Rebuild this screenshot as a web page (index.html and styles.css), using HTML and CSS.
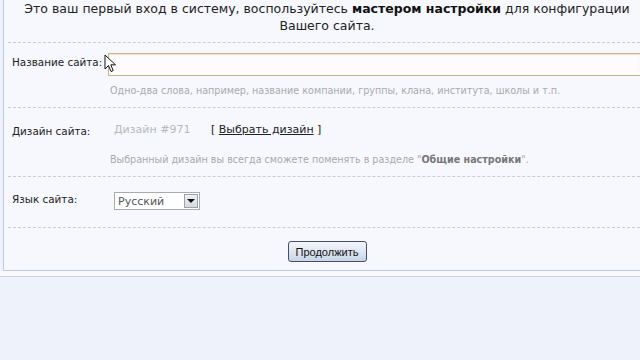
FILE: index.html
```html
<!DOCTYPE html>
<html lang="ru">
<head>
<meta charset="utf-8">
<title>Мастер настройки</title>
<link rel="stylesheet" href="styles.css">
</head>
<body>
<div class="panel">
  <div class="intro">
    <div class="line">Это ваш первый вход в систему, воспользуйтесь <b>мастером настройки</b> для конфигурации</div>
    <div class="line">Вашего сайта.</div>
  </div>

  <div class="row row-name">
    <div class="label">Название сайта:</div>
    <div class="field">
      <div class="input"></div>
      <svg class="cursor" width="14" height="20" viewBox="0 0 14 20"><path d="M1 1 L1 15 L4.5 11.5 L7 17.5 L9.2 16.6 L6.8 10.8 L11.5 10.8 Z" fill="#fff" stroke="#111" stroke-width="1" stroke-linejoin="round"/></svg>
    </div>
    <div class="hint">Одно-два слова, например, название компании, группы, клана, института, школы и т.п.</div>
  </div>

  <div class="row row-design">
    <div class="label">Дизайн сайта:</div>
    <div class="field design">
      <span class="design-name">Дизайн #971</span>
      <span class="choose">[ <u>Выбрать дизайн</u> ]</span>
    </div>
    <div class="hint">Выбранный дизайн вы всегда сможете поменять в разделе "<b>Общие настройки</b>".</div>
  </div>

  <div class="row row-lang">
    <div class="label">Язык сайта:</div>
    <div class="field">
      <div class="select"><span class="sel-text">Русский</span><span class="sel-btn"><svg width="8" height="5" viewBox="0 0 8 5"><path d="M0 0 L8 0 L4 4 Z" fill="#111"/></svg></span></div>
    </div>
  </div>

  <div class="actions">
    <button class="btn">Продолжить</button>
  </div>
</div>
<div class="strip"></div>
</body>
</html>
```
FILE: styles.css
```css
html, body {
  margin: 0;
  padding: 0;
  background: #eef2fb;
  font-family: "DejaVu Sans", Verdana, sans-serif;
  color: #222;
}
.panel {
  margin-left: 3px;
  border-left: 1px solid #bcc8dc;
  border-bottom: 1px solid #bcc8dc;
  background: #f6f8fd;
  height: 271px;
  box-sizing: border-box;
  overflow: hidden;
}
.intro {
  margin: 0 0 0 10px;
  padding: 0 0 8px;
  font-size: 12.5px;
  line-height: 17px;
  text-align: center;
  color: #222;
}
.intro b { color: #111; }
.row {
  margin-left: 4px;
  border-top: 1px dashed #c8ccd4;
  display: grid;
  grid-template-columns: 96px 1fr;
  padding-left: 4px;
}
.label {
  font-size: 10.4px;
  color: #222;
  white-space: nowrap;
}
.hint {
  grid-column: 2;
  font-size: 9.6px;
  color: #a9a9ad;
  padding-left: 2px;
}
.hint b { color: #777; }
.row-name { padding-top: 10px; height: 65px; box-sizing: border-box; }
.row-name .label { padding-top: 3px; }
.row-name .field { position: relative; }
.input {
  height: 21px;
  border: 1px solid #cdb487;
  border-right: none;
  background: #fdfbfd;
  box-shadow: inset 0 1px 1px #ece4d4;
}
.cursor { position: absolute; left: -4px; top: 1px; }
.row-name .hint { margin-top: -2px; }

.row-design { padding-top: 15px; height: 69px; box-sizing: border-box; }
.row-design .label { padding-top: 2px; }
.design { display: flex; font-size: 11px; padding-left: 6px; }
.design-name { color: #b8b8bc; width: 97px; }
.choose { color: #222; }
.row-design .hint { padding-top: 6px; }

.row-lang { padding-top: 15px; height: 51px; box-sizing: border-box; }
.row-lang .label { padding-top: 1px; }
.select {
  margin-left: 6px;
  width: 86px;
  height: 18px;
  box-sizing: border-box;
  border: 1px solid #a5acb5;
  background: #fff;
  display: flex;
  align-items: center;
  justify-content: space-between;
}
.sel-text { font-size: 11px; color: #555; padding-left: 3px; }
.sel-btn {
  width: 14px;
  height: 14px;
  margin-right: 1px;
  box-sizing: border-box;
  border: 1px solid #9aa2ac;
  background: linear-gradient(#eef0f3, #d6dae0);
  display: flex;
  align-items: center;
  justify-content: center;
}
.actions {
  margin-left: 4px;
  border-top: 1px dashed #c8ccd4;
  display: flex;
  justify-content: center;
  padding-top: 13px;
}
.btn {
  width: 79px;
  height: 21px;
  border: 1px solid #3f506b;
  border-radius: 3px;
  background: linear-gradient(#f4f6fb, #cbd4e6);
  font-family: "Liberation Sans", Arial, sans-serif;
  font-size: 11px;
  color: #111;
  padding: 0;
  margin-left: 6px;
}
.strip {
  height: 5px;
  background: #f9fafd;
  border-bottom: 1px solid #c9d2e3;
}
```
